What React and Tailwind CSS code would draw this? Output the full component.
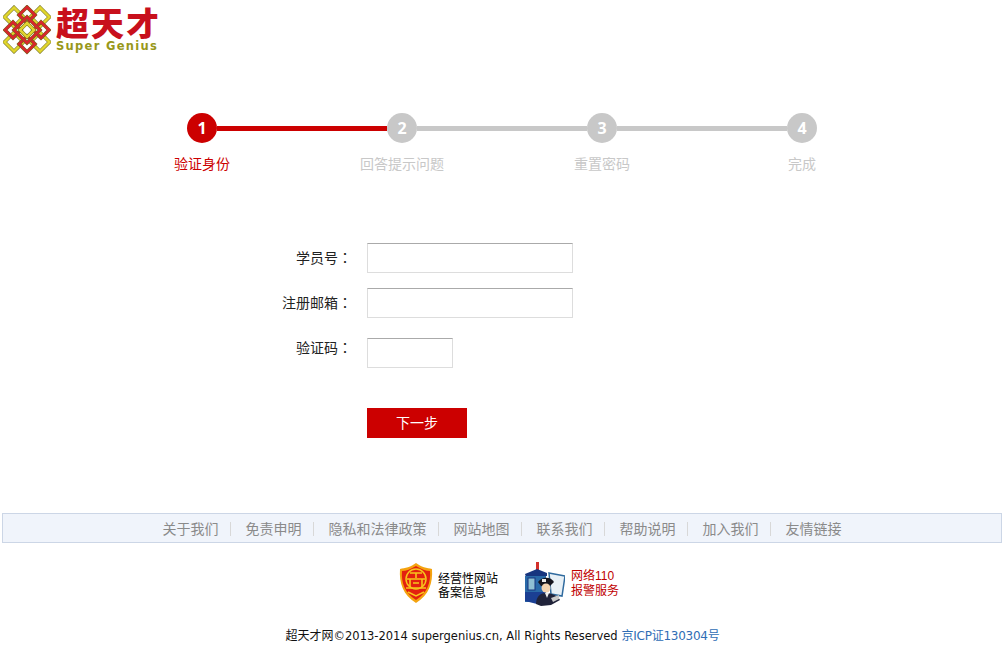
import { Fragment } from "react";

const cjk = "font-['Liberation_Sans','Noto_Sans_CJK_SC',sans-serif]";

const steps = [
  { num: 1, label: "验证身份", active: true },
  { num: 2, label: "回答提示问题" },
  { num: 3, label: "重置密码" },
  { num: 4, label: "完成" },
];

const links = [
  "关于我们",
  "免责申明",
  "隐私和法律政策",
  "网站地图",
  "联系我们",
  "帮助说明",
  "加入我们",
  "友情链接",
];

function Diamond({ x, y, r, color }) {
  const pts = `${x},${y - r} ${x + r},${y} ${x},${y + r} ${x - r},${y}`;
  return (
    <g>
      <polygon points={pts} fill="none" stroke="#6b6a1a" strokeWidth="3.6" />
      <polygon points={pts} fill="none" stroke={color} strokeWidth="2.6" />
    </g>
  );
}

function LogoKnot() {
  const yellow = "#e0d52e";
  const red = "#d8262c";
  return (
    <svg width="48" height="50" viewBox="0 0 48 50" className="mt-[1px] shrink-0">
      <Diamond x={11} y={12} r={9.5} color={yellow} />
      <Diamond x={37} y={12} r={9.5} color={yellow} />
      <Diamond x={11} y={37} r={9.5} color={yellow} />
      <Diamond x={37} y={37} r={9.5} color={yellow} />
      <Diamond x={24} y={10} r={8} color={red} />
      <Diamond x={24} y={39} r={8} color={red} />
      <Diamond x={10} y={25} r={8} color={red} />
      <Diamond x={38} y={25} r={8} color={red} />
      <Diamond x={24} y={25} r={13} color={red} />
      <Diamond x={24} y={25} r={7} color={yellow} />
    </svg>
  );
}

function Shield() {
  return (
    <svg width="34" height="40" viewBox="0 0 34 40" className="-mt-[2px] shrink-0">
      <path d="M17 0C22 4 28 5 33 6C34 20 30 32 17 40C4 32 0 20 1 6C6 5 12 4 17 0Z" fill="#f4a30f" />
      <path d="M17 3C22 6 27 8 31 8C32 20 28 30 17 37C6 30 2 20 3 8C7 8 12 6 17 3Z" fill="#e3200f" />
      <circle cx="17" cy="16" r="10" fill="none" stroke="#f7c51c" strokeWidth="1.5" />
      <path d="M11 10H23M17 10V15M8 16H26M11 16V24M23 16V24M14 20H20M7 25H27" stroke="#f7c51c" strokeWidth="1.6" fill="none" />
      <path d="M9 29L17 33L25 29" stroke="#f7c51c" strokeWidth="1.5" fill="none" />
    </svg>
  );
}

function Police() {
  return (
    <svg width="42" height="44" viewBox="0 0 42 44" className="shrink-0">
      <rect x="13" y="0" width="3" height="8" fill="#d3302a" />
      <path d="M2 12L14 7L24 11L24 14L3 15Z" fill="#17357f" />
      <rect x="2" y="14" width="21" height="26" fill="#2a6aa8" />
      <rect x="5" y="16" width="7" height="12" fill="#8fc0d4" stroke="#17357f" />
      <path d="M2 30H22V41L14 42L2 39Z" fill="#1b3f93" />
      <path d="M26 11L42 14L39 34L28 32Z" fill="#e8f0f6" stroke="#2f6a9e" strokeWidth="1.5" />
      <path d="M15 20C20 14 28 15 31 20L27 24H18Z" fill="#15151f" />
      <rect x="19" y="17" width="4" height="3" fill="#e9e9e9" />
      <circle cx="23" cy="26" r="4.5" fill="#f2d2b0" />
      <path d="M13 42C13 34 18 31 23 31C29 31 35 34 37 38L28 43L18 44Z" fill="#20233a" />
      <path d="M22 31L26 31L24 36Z" fill="#efefef" />
      <path d="M28 36L36 33L36 37L30 40Z" fill="#c9c9c9" />
    </svg>
  );
}

function Field({ label, className = "", inputClass = "w-[206px]", labelClass = "" }) {
  return (
    <div className={`flex h-[30px] ${className}`}>
      <label className={`mr-[15px] h-[30px] w-[100px] text-right text-[14px] leading-[28px] whitespace-nowrap text-[#222] ${labelClass}`}>
        {label}
        <span className="font-['Noto_Sans_CJK_TC',sans-serif]">：</span>
      </label>
      <input
        type="text"
        className={`block h-[30px] border border-[#dddddd] border-t-[#aaaaaa] bg-white ${inputClass}`}
      />
    </div>
  );
}

export default function App() {
  return (
    <div className={`min-h-[651px] bg-white pt-1 ${cjk}`}>
      {/* logo */}
      <div className="flex h-[52px] pl-[3px]">
        <LogoKnot />
        <div className="ml-[5px] flex flex-col">
          <div className="h-[36px] text-[33px] leading-[36px] font-black tracking-[2px] whitespace-nowrap text-[#c8101c] font-['Noto_Sans_CJK_SC',sans-serif]">
            超天才
          </div>
          <div className="text-[11.5px] leading-[12px] font-bold tracking-[1.3px] whitespace-nowrap text-[#98981a] font-['DejaVu_Sans',sans-serif]">
            Super Genius
          </div>
        </div>
      </div>

      {/* stepper */}
      <div className="mt-[57px] ml-[187px] flex items-center">
        {steps.map((s, i) => (
          <Fragment key={s.num}>
            <div
              className={`flex h-[30px] w-[30px] items-center justify-center rounded-full text-[16px] font-bold text-white font-['Open_Sans',sans-serif] ${
                s.active ? "bg-[#cc0000]" : "bg-[#c8c8c8]"
              }`}
            >
              {s.num}
            </div>
            {i < 3 && (
              <div className={`h-[5px] w-[170px] ${s.active ? "bg-[#cc0000]" : "bg-[#c8c8c8]"}`} />
            )}
          </Fragment>
        ))}
      </div>
      <div className="mt-[11px] ml-[102px] grid w-[800px] grid-cols-4 text-center text-[14px] leading-[20px]">
        {steps.map((s) => (
          <div key={s.num} className={s.active ? "text-[#cc0000]" : "text-[#c8c8c8]"}>
            {s.label}
          </div>
        ))}
      </div>

      {/* form */}
      <div className="mt-[69px] ml-[252px] flex flex-col">
        <Field label="学员号" />
        <Field label="注册邮箱" className="mt-[15px]" />
        <Field label="验证码" className="mt-[20px]" inputClass="w-[86px]" labelClass="-mt-[5px]" />
        <button className="mt-[40px] ml-[115px] h-[30px] w-[100px] bg-[#cc0000] text-[14px] text-white">
          下一步
        </button>
      </div>

      {/* footer nav */}
      <div className="mx-[2px] mt-[75px] flex h-[30px] w-[1000px] items-center justify-center border border-[#ccd6e6] bg-[#f0f4fb] pt-[2px] text-[14px] text-[#8a8a8a]">
        {links.map((l, i) => (
          <Fragment key={l}>
            {i > 0 && <span className="mr-[15px] ml-[11px] h-[14px] w-px bg-[#d8d8d8]" />}
            <span>{l}</span>
          </Fragment>
        ))}
      </div>

      <div className="mt-[20px] ml-[399px] flex h-[42px] items-center">
        <Shield />
        <div className="mt-[3px] ml-[5px] w-[62px] text-[12px] leading-[14px] text-black">
          经营性网站
          <br />
          备案信息
        </div>
        <div className="ml-[23px]">
          <Police />
        </div>
        <div className="ml-[6px] text-[12px] leading-[15px] text-[#c00000]">
          网络110
          <br />
          报警服务
        </div>
      </div>

      <div className="mt-[22px] text-center text-[12px] leading-[18px] whitespace-nowrap text-[#111] font-['DejaVu_Sans','Noto_Sans_CJK_SC',sans-serif]">
        超天才网<span className="text-[11.5px]">©2013-2014 supergenius.cn, All Rights Reserved</span>{" "}
        <span className="tracking-[-0.25px] text-[#2f6db5]">京ICP证130304号</span>
      </div>
    </div>
  );
}
